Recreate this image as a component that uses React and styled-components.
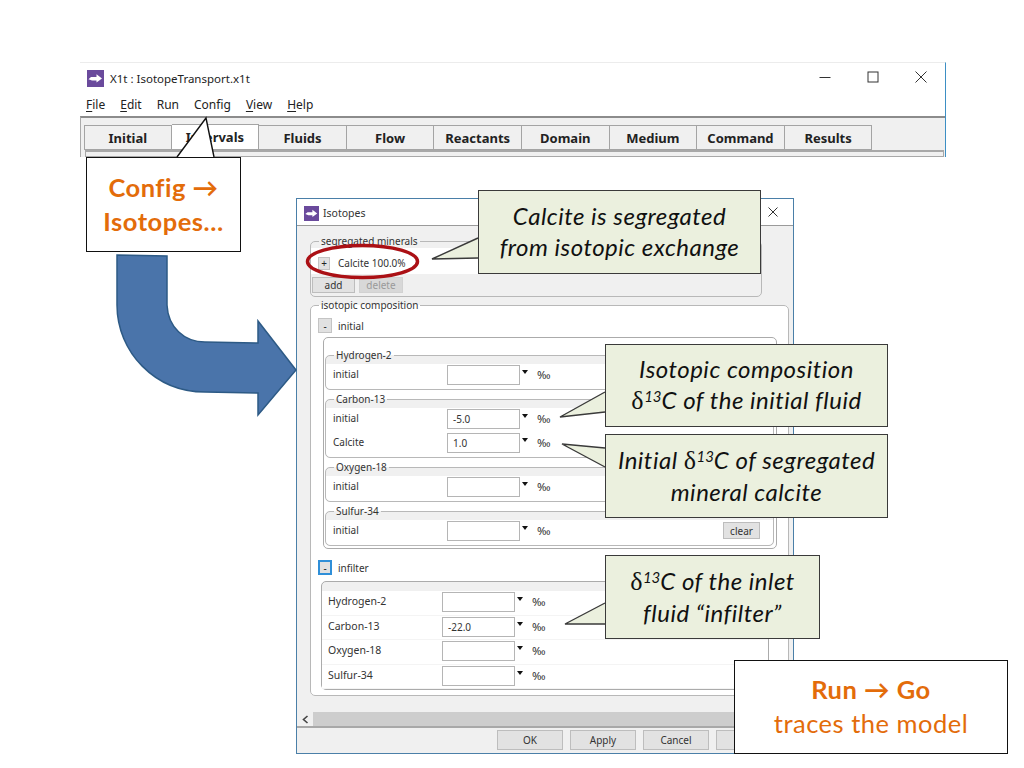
import React from "react";
import styled, { createGlobalStyle } from "styled-components";

const GlobalStyle = createGlobalStyle`
  html, body {
    margin: 0;
    padding: 0;
    background: #fff;
  }
`;

const Slide = styled.div`
  position: relative;
  width: 1024px;
  height: 768px;
  overflow: hidden;
  background: #fff;
  font-family: "Noto Sans", "Liberation Sans", sans-serif;
`;

/* main X1t window */
const MainWindow = styled.div`
  position: absolute;
  left: 80px;
  top: 62px;
  width: 866px;
  height: 95px;
  box-sizing: border-box;
  border-top: 1px solid #ececec;
  border-right: 1px solid #3d8fc4;
  display: flex;
  flex-direction: column;
  background: #fff;
  overflow: hidden;
  isolation: isolate;
`;

const MainTitle = styled.div`
  height: 30px;
  flex: none;
  display: flex;
  align-items: center;
  padding-left: 7px;
  gap: 6px;
  font-size: 11.5px;
  color: #222;
`;

const WindowControls = styled.div`
  margin-left: auto;
  display: flex;
  align-items: center;
  gap: 36px;
  padding-right: 18px;
  margin-top: -2px;
`;

const MenuBar = styled.div`
  height: 23px;
  flex: none;
  display: flex;
  align-items: center;
  padding-left: 6px;
  gap: 15px;
  font-size: 12px;
  color: #222;

  u {
    text-underline-offset: 2px;
  }
`;

const TabBar = styled.div`
  flex: 1;
  background: #f0f0f0;
  border-top: 2px solid #8c8c8c;
  border-left: 1px solid #aaa;
  padding: 7px 0 0 3px;
  display: flex;
  flex-direction: column;
`;

const TabRow = styled.div`
  display: flex;
  align-items: flex-start;
  height: 25px;
  flex: none;
`;

const Tab = styled.div`
  box-sizing: border-box;
  width: 87.6px;
  height: ${(p) => (p.$active ? "26px" : "25px")};
  margin-top: ${(p) => (p.$active ? "-1px" : "0")};
  border: 1px solid #a4a4a4;
  border-left-width: ${(p) => (p.$first ? "1px" : "0")};
  background: ${(p) => (p.$active ? "#fff" : "#f0f0f0")};
  display: flex;
  align-items: center;
  justify-content: center;
  font-size: 13px;
  font-weight: 700;
  color: #222;
  position: relative;
  z-index: ${(p) => (p.$active ? 1 : 0)};
`;

const TabPane = styled.div`
  flex: 1;
  margin: 0 1px 0 1px;
  border: 1px solid #a8a8a8;
  border-top: 2px solid #a8a8a8;
`;

/* isotopes dialog */
const Dialog = styled.div`
  position: absolute;
  left: 296px;
  top: 198px;
  width: 498px;
  height: 556px;
  box-sizing: border-box;
  border: 1px solid #4a7fa8;
  display: flex;
  flex-direction: column;
  background: #f0f0f0;
  font-size: 10px;
  color: #333;
`;

const DialogTitle = styled.div`
  height: 27px;
  flex: none;
  box-sizing: border-box;
  background: #fff;
  border-bottom: 1px solid #9a9a9a;
  display: flex;
  align-items: center;
  padding: 2px 15px 0 7px;
  gap: 4px;
  font-size: 10.5px;
`;

const DialogClose = styled(WindowControls)`
  padding-right: 0;
`;

const DialogScroll = styled.div`
  flex: 1;
  padding: 9px 0 0 13px;
`;

const Group = styled.fieldset`
  margin: ${(p) => p.$margin || "0"};
  padding: 0 0 ${(p) => p.$padBottom || "0"} 0;
  width: ${(p) => p.$width}px;
  box-sizing: border-box;
  min-width: 0;
  border: 1px solid #b8b8b8;
  border-radius: 5px;
  background: ${(p) => p.$bg || "transparent"};
`;

const Legend = styled.legend`
  margin-left: ${(p) => p.$indent || 8}px;
  padding: 0 2px;
  font-size: 10px;
  line-height: 12px;
  height: 12px;
  color: #333;
`;

const MineralRow = styled.div`
  box-sizing: border-box;
  height: 26px;
  margin: 1px 0 0 0;
  background: #fff;
  display: flex;
  align-items: center;
  padding: 4px 0 0 7px;
  gap: 8px;
`;

const ActionRow = styled.div`
  display: flex;
  gap: 4px;
  padding: 3px 0 3px 1px;
`;

const Button = styled.div`
  box-sizing: border-box;
  width: ${(p) => p.$w || 66}px;
  height: ${(p) => p.$h || 20}px;
  border: 1px solid ${(p) => (p.$disabled ? "#d2d2d2" : "#bdbdbd")};
  background: ${(p) => (p.$disabled ? "#d8d8d8" : "#e2e2e2")};
  color: ${(p) => (p.$disabled ? "#9a9a9a" : "#333")};
  display: flex;
  align-items: center;
  justify-content: center;
  font-size: 10px;
`;

const Toggle = styled.div`
  box-sizing: border-box;
  width: ${(p) => p.$w || 14}px;
  height: ${(p) => p.$h || 15}px;
  flex: none;
  border: ${(p) => (p.$focus ? "2px solid #2f8fd8" : "1px solid #c4c4c4")};
  background: #e1e1e1;
  display: flex;
  align-items: center;
  justify-content: center;
  font-size: 10px;
  color: #222;
`;

const SectionHead = styled.div`
  display: flex;
  align-items: center;
  gap: 6px;
  margin: ${(p) => p.$margin};
  padding-left: 7px;
  height: ${(p) => p.$h}px;
`;

const ElementBox = styled.div`
  box-sizing: border-box;
  width: ${(p) => p.$width}px;
  margin-left: ${(p) => p.$left}px;
  border: 1px solid #ababab;
  border-radius: 5px;
  padding-top: ${(p) => p.$top}px;
  padding-bottom: ${(p) => p.$bottom || 0}px;
  background: ${(p) => p.$bg || "#fff"};
`;

const ElementList = styled.div`
  display: flex;
  flex-direction: column;
  gap: 3px;
  padding-left: 1px;
`;

const RowsArea = styled.div`
  margin-top: 3px;
  background: #fff;
  border-radius: 0 0 5px 5px;
  padding-bottom: 1px;
`;

const IsoRow = styled.div`
  display: flex;
  align-items: flex-start;
  box-sizing: border-box;
  height: 24px;
  padding: 1px 13px 0 7px;
`;

const InfilterRow = styled(IsoRow)`
  height: 24.5px;
  padding-left: 6px;
  background: #fff;
  border-bottom: 1px solid #f4f4f4;
`;

const RowLabel = styled.span`
  width: ${(p) => p.$w}px;
  flex: none;
  line-height: 19px;
  font-size: ${(p) => p.$size || 10}px;
`;

const ValueInput = styled.div`
  box-sizing: border-box;
  width: 73px;
  height: 20px;
  flex: none;
  border: 1px solid #b5b5b5;
  background: #fff;
  padding-left: 5px;
  line-height: 18px;
  font-size: 10px;
`;

const DropArrow = styled.span`
  flex: none;
  width: 0;
  height: 0;
  margin: 5px 0 0 2px;
  border-left: 3.5px solid transparent;
  border-right: 3.5px solid transparent;
  border-top: 4px solid #111;
`;

const Permil = styled.span`
  margin-left: 9px;
  line-height: 19px;
  font-size: 11.5px;
`;

const ClearButton = styled(Button)`
  margin-left: auto;
  margin-top: 1px;
`;

const ScrollBar = styled.div`
  height: 16px;
  box-sizing: border-box;
  flex: none;
  background: #cdcdcd;
  border-bottom: 2px solid #a8a8a8;
  display: flex;
`;

const ScrollArrow = styled.div`
  width: 16px;
  background: #f0f0f0;
  display: flex;
  align-items: center;
  justify-content: center;
`;

const DialogButtons = styled.div`
  height: 25px;
  box-sizing: border-box;
  flex: none;
  display: flex;
  justify-content: flex-end;
  gap: 7px;
  padding: 2px 11px 0 0;
`;

/* slide annotations */
const Callout = styled.div`
  position: absolute;
  left: ${(p) => p.$x}px;
  top: ${(p) => p.$y}px;
  width: ${(p) => p.$w}px;
  height: ${(p) => p.$h}px;
  box-sizing: border-box;
  padding-bottom: 2px;
  border: 1.5px solid ${(p) => (p.$plain ? "#111" : "#3a3a3a")};
  background: ${(p) => (p.$plain ? "#fff" : "#ebf0de")};
  display: flex;
  flex-direction: column;
  align-items: center;
  justify-content: center;
  font-family: Lato, "Open Sans", sans-serif;
  font-size: ${(p) => (p.$plain ? "25.5px" : "24px")};
  letter-spacing: 0.5px;
  line-height: ${(p) => (p.$plain ? "34px" : "31px")};
  font-style: ${(p) => (p.$plain ? "normal" : "italic")};
  color: ${(p) => (p.$plain ? "#e36c0a" : "#111")};
  white-space: nowrap;
`;

const CalloutLine = styled.div`
  position: relative;
  font-weight: ${(p) => (p.$bold ? 700 : 400)};
`;

const Delta = styled.span`
  font-family: "Liberation Serif", serif;
  font-style: normal;
  font-size: 26px;
`;

const Sup = styled.sup`
  font-size: 15px;
  line-height: 0;
  letter-spacing: 0;
  vertical-align: 7px;
`;

const TailSvg = styled.svg`
  position: absolute;
  left: -1.5px;
  top: -1.5px;
  overflow: visible;
`;

const Overlay = styled.svg`
  position: absolute;
  left: 0;
  top: 0;
  pointer-events: none;
`;

const AppIconSvg = styled.svg`
  flex: none;
`;

function Tail({ base1, tip, base2, fill, stroke }) {
  const pts = `${base1} ${tip} ${base2}`;
  return (
    <TailSvg width="1" height="1">
      <polygon points={pts} fill={fill} stroke="none" />
      <polyline points={pts} fill="none" stroke={stroke} strokeWidth="1.4" />
    </TailSvg>
  );
}

function AppIcon({ size }) {
  return (
    <AppIconSvg width={size} height={size} viewBox="0 0 17 17">
      <rect width="17" height="17" fill="#6a4a9c" />
      <path d="M1.5 9.2 L4 7 H9.5 V4.2 L15 8.4 L9.5 12.4 V10.4 H5 Z" fill="#fff" />
    </AppIconSvg>
  );
}

const TABS = ["Initial", "Intervals", "Fluids", "Flow", "Reactants", "Domain", "Medium", "Command", "Results"];

function ElementGroup({ name, rows, clear }) {
  return (
    <Group $width={449} $bg="#f0f0f0">
      <Legend $indent={8}>{name}</Legend>
      <RowsArea>
        {rows.map(([label, value]) => (
          <IsoRow key={label}>
            <RowLabel $w={114}>{label}</RowLabel>
            <ValueInput>{value}</ValueInput>
            <DropArrow />
            <Permil>‰</Permil>
            {clear && <ClearButton $w={37} $h={17}>clear</ClearButton>}
          </IsoRow>
        ))}
      </RowsArea>
    </Group>
  );
}

const INFILTER = [
  ["Hydrogen-2", ""],
  ["Carbon-13", "-22.0"],
  ["Oxygen-18", ""],
  ["Sulfur-34", ""],
];

export default function App() {
  return (
    <Slide>
      <GlobalStyle />

      <MainWindow>
        <MainTitle>
          <AppIcon size={17} />
          X1t : IsotopeTransport.x1t
          <WindowControls>
            <svg width="12" height="12" viewBox="0 0 12 12"><path d="M0.5 6.5 H11.5" stroke="#333" strokeWidth="1" /></svg>
            <svg width="12" height="12" viewBox="0 0 12 12"><rect x="1" y="1" width="10" height="10" fill="none" stroke="#333" strokeWidth="1" /></svg>
            <svg width="12" height="12" viewBox="0 0 12 12"><path d="M0.5 0.5 L11.5 11.5 M11.5 0.5 L0.5 11.5" stroke="#333" strokeWidth="1" /></svg>
          </WindowControls>
        </MainTitle>
        <MenuBar>
          <span><u>F</u>ile</span>
          <span><u>E</u>dit</span>
          <span>Run</span>
          <span>Config</span>
          <span><u>V</u>iew</span>
          <span><u>H</u>elp</span>
        </MenuBar>
        <TabBar>
          <TabRow>
            {TABS.map((t, i) => (
              <Tab key={t} $first={i === 0} $active={t === "Intervals"}>{t}</Tab>
            ))}
          </TabRow>
          <TabPane />
        </TabBar>
      </MainWindow>

      <Dialog>
        <DialogTitle>
          <AppIcon size={15} />
          Isotopes
          <DialogClose>
            <svg width="10" height="10" viewBox="0 0 10 10"><path d="M0.5 0.5 L9.5 9.5 M9.5 0.5 L0.5 9.5" stroke="#333" strokeWidth="1" /></svg>
          </DialogClose>
        </DialogTitle>
        <DialogScroll>
          <Group $width={452}>
            <Legend>segregated minerals</Legend>
            <MineralRow>
              <Toggle $w={12} $h={13}>+</Toggle>
              Calcite 100.0%
            </MineralRow>
            <ActionRow>
              <Button $w={43} $h={16}>add</Button>
              <Button $w={44} $h={16} $disabled>delete</Button>
            </ActionRow>
          </Group>

          <Group $width={479} $margin="2px 0 0 0" $padBottom="5px" $bg="#fff">
            <Legend>isotopic composition</Legend>
            <SectionHead $margin="7px 0 4px 0" $h={15}>
              <Toggle>-</Toggle>
              initial
            </SectionHead>
            <ElementBox $width={454} $left={12} $top={11} $bottom={2}>
              <ElementList>
                <ElementGroup name="Hydrogen-2" rows={[["initial", ""]]} />
                <ElementGroup name="Carbon-13" rows={[["initial", "-5.0"], ["Calcite", "1.0"]]} />
                <ElementGroup name="Oxygen-18" rows={[["initial", ""]]} />
                <ElementGroup name="Sulfur-34" rows={[["initial", ""]]} clear />
              </ElementList>
            </ElementBox>
            <SectionHead $margin="11px 0 6px 0" $h={15}>
              <Toggle $focus>-</Toggle>
              infilter
            </SectionHead>
            <ElementBox $width={448} $left={10} $top={9} $bg="#f0f0f0">
              {INFILTER.map(([label, value]) => (
                <InfilterRow key={label}>
                  <RowLabel $w={114} $size={10.5}>{label}</RowLabel>
                  <ValueInput>{value}</ValueInput>
                  <DropArrow />
                  <Permil>‰</Permil>
                </InfilterRow>
              ))}
            </ElementBox>
          </Group>
        </DialogScroll>
        <ScrollBar>
          <ScrollArrow>
            <svg width="7" height="9" viewBox="0 0 7 9"><path d="M5.5 1 L1.5 4.5 L5.5 8" fill="none" stroke="#444" strokeWidth="1.6" /></svg>
          </ScrollArrow>
        </ScrollBar>
        <DialogButtons>
          <Button>OK</Button>
          <Button>Apply</Button>
          <Button>Cancel</Button>
          <Button />
        </DialogButtons>
      </Dialog>

      <Overlay width="1024" height="768">
        <path
          d="M117 255 L167 256 L167 305 C168 327 184 342 205 342 L258 343 L258 321 L296 370 L258 415 L258 393 L205 392 C155 392 117 352 117 305 Z"
          fill="#4a74aa"
          stroke="#2d5a85"
          strokeWidth="1.5"
        />
        <ellipse cx="362.5" cy="261.5" rx="55" ry="16" fill="none" stroke="#ab1015" strokeWidth="3.5" />
      </Overlay>

      <Callout $plain $x={86} $y={157} $w={155} $h={95}>
        <Tail base1="91,0" tip="120,-39" base2="128,0" fill="#fff" stroke="#111" />
        <CalloutLine $bold>Config →</CalloutLine>
        <CalloutLine $bold>Isotopes…</CalloutLine>
      </Callout>

      <Callout $x={478} $y={190} $w={283} $h={84}>
        <Tail base1="0,48" tip="-46,69" base2="0,68" fill="#ebf0de" stroke="#3a3a3a" />
        <CalloutLine>Calcite is segregated</CalloutLine>
        <CalloutLine>from isotopic exchange</CalloutLine>
      </Callout>

      <Callout $x={605} $y={344} $w={283} $h={83}>
        <Tail base1="0,48" tip="-45,73" base2="0,68" fill="#ebf0de" stroke="#3a3a3a" />
        <CalloutLine>Isotopic composition</CalloutLine>
        <CalloutLine><Delta>δ</Delta><Sup>13</Sup>C of the initial fluid</CalloutLine>
      </Callout>

      <Callout $x={605} $y={434} $w={283} $h={84}>
        <Tail base1="0,14" tip="-43,10" base2="0,33" fill="#ebf0de" stroke="#3a3a3a" />
        <CalloutLine>Initial <Delta>δ</Delta><Sup>13</Sup>C of segregated</CalloutLine>
        <CalloutLine>mineral calcite</CalloutLine>
      </Callout>

      <Callout $x={605} $y={555} $w={215} $h={84}>
        <Tail base1="0,48" tip="-40,69" base2="0,69" fill="#ebf0de" stroke="#3a3a3a" />
        <CalloutLine><Delta>δ</Delta><Sup>13</Sup>C of the inlet</CalloutLine>
        <CalloutLine>fluid “infilter”</CalloutLine>
      </Callout>

      <Callout $plain $x={734} $y={660} $w={274} $h={94}>
        <CalloutLine $bold>Run → Go</CalloutLine>
        <CalloutLine>traces the model</CalloutLine>
      </Callout>
    </Slide>
  );
}
